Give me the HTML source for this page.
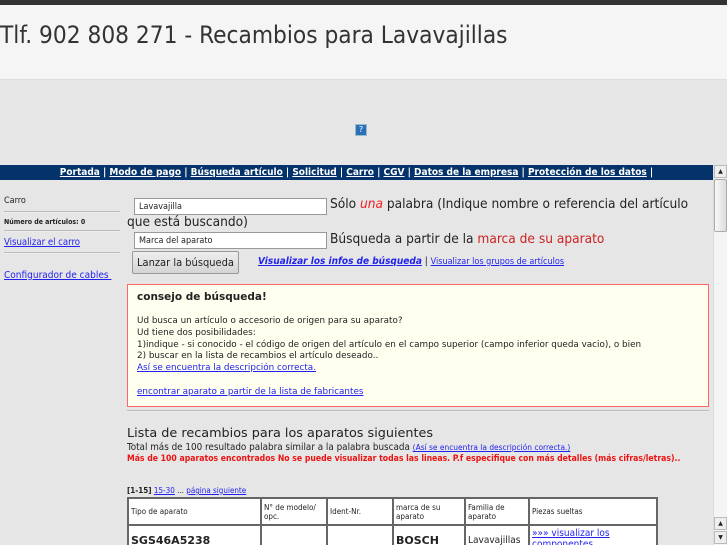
<!DOCTYPE html>
<html style="overflow:hidden"><head><meta charset="utf-8"><style>
*{margin:0;padding:0;box-sizing:border-box}
html,body{width:727px;height:545px;overflow:hidden}
body{background:#e6e6e6;font-family:"DejaVu Sans","Liberation Sans",sans-serif;color:#222;position:relative}
.a{position:absolute;white-space:nowrap}
.c{font-family:"DejaVu Sans Condensed","DejaVu Sans",sans-serif}
a{color:#22e;text-decoration:underline}
.hr{position:absolute;height:2px;background:#bbb;border-bottom:1px solid #eee}
.inp{position:absolute;background:#fff;border:1px solid #999;font-size:9px;padding:3px 4px;height:17px;width:193px}
table{position:absolute;left:127px;top:497px;border-collapse:collapse;background:#fff;font-size:8px}
td{border:2px solid #666;padding:2px 2px;vertical-align:middle}
</style></head><body>
<div class="a" style="left:0;top:0;width:727px;height:5px;background:#333"></div>
<div class="a" style="left:0;top:5px;width:727px;height:75px;background:#f5f5f5;border-bottom:1px solid #ddd"></div>
<div class="a c" style="left:0;top:21px;font-size:24.2px;color:#333">Tlf. 902 808 271 - Recambios para Lavavajillas</div>
<div class="a" style="left:355px;top:124px;width:12px;height:12px;background:#2a6fb8;border:1px solid #9bc;color:#fff;font-size:8px;text-align:center;line-height:10px">?</div>

<div class="a c" style="left:0;top:165px;width:713px;height:15px;background:#03336a;color:#fff;font-size:10px;font-weight:bold;line-height:15px;text-align:center;padding-left:0">
<span style="text-decoration:underline">Portada</span> | <span style="text-decoration:underline">Modo de pago</span> | <span style="text-decoration:underline">Búsqueda artículo</span> | <span style="text-decoration:underline">Solicitud</span> | <span style="text-decoration:underline">Carro</span> | <span style="text-decoration:underline">CGV</span> | <span style="text-decoration:underline">Datos de la empresa</span> | <span style="text-decoration:underline">Protección de los datos</span> |</div>

<div class="a c" style="left:4px;top:196px;font-size:9px">Carro</div>
<div class="hr" style="left:4px;top:211px;width:116px"></div>
<div class="a c" style="left:4px;top:218px;font-size:7px;font-weight:bold">Número de artículos: 0</div>
<div class="hr" style="left:4px;top:230px;width:116px"></div>
<div class="a c" style="left:4px;top:237px;font-size:9.5px"><a>Visualizar el carro</a></div>
<div class="hr" style="left:4px;top:252px;width:116px"></div>
<div class="a c" style="left:4px;top:270px;font-size:10px"><a>Configurador de cables&nbsp;</a></div>

<div class="inp c" style="left:134px;top:198px">Lavavajilla</div>
<div class="a c" style="left:330px;top:196px;font-size:13.6px">Sólo <i style="color:#e22">una</i> palabra (Indique nombre o referencia del artículo</div>
<div class="a c" style="left:127px;top:214px;font-size:13.6px">que está buscando)</div>
<div class="inp c" style="left:134px;top:232px">Marca del aparato</div>
<div class="a c" style="left:330px;top:231px;font-size:13.6px">Búsqueda a partir de la <span style="color:#c22">marca de su aparato</span></div>
<div class="a c" style="left:132px;top:251px;width:107px;height:23px;border:1px solid #999;border-radius:2px;background:linear-gradient(#eee,#d4d4d4);font-size:11px;text-align:center;line-height:21px">Lanzar la búsqueda</div>
<div class="a c" style="left:258px;top:256px;font-size:10px"><a style="font-weight:bold;font-style:italic">Visualizar los infos de búsqueda</a> | <a style="font-size:9px">Visualizar los grupos de artículos</a></div>

<div class="a" style="left:127px;top:284px;width:582px;height:123px;background:#ffffef;border:1px solid #f66"></div>
<div class="a" style="left:137px;top:291px;font-size:10.5px;font-weight:bold">consejo de búsqueda!</div>
<div class="a" style="left:137px;top:316px;font-size:8.8px;line-height:11.8px">Ud busca un artículo o accesorio de origen para su aparato?<br>Ud tiene dos posibilidades:<br>1)indique - si conocido - el código de origen del artículo en el campo superior (campo inferior queda vacio), o bien<br>2) buscar en la lista de recambios el artículo deseado..<br><a>Así se encuentra la descripción correcta.</a><br><br><a>encontrar aparato a partir de la lista de fabricantes</a></div>
<div class="hr" style="left:127px;top:410px;width:582px"></div>

<div class="a" style="left:127px;top:426px;font-size:12.8px">Lista de recambios para los aparatos siguientes</div>
<div class="a c" style="left:127px;top:442px;font-size:9.8px">Total más de 100 resultado palabra similar a la palabra buscada <a style="font-size:8.3px">(Así se encuentra la descripción correcta.)</a></div>
<div class="a c" style="left:127px;top:454px;font-size:8.6px;font-weight:bold;color:#e11">Más de 100 aparatos encontrados No se puede visualizar todas las lineas. P.f especifique con más detalles (más cifras/letras)..</div>
<div class="a c" style="left:127px;top:486px;font-size:8px"><b>[1-15]</b> <a>15-30</a> ... <a>página siguiente</a></div>

<table class="c"><tr style="height:27px">
<td style="width:133px">Tipo de aparato</td><td style="width:66px">N° de modelo/<br>opc.</td><td style="width:66px">Ident-Nr.</td><td style="width:72px">marca de su<br>aparato</td><td style="width:64px">Familia de<br>aparato</td><td style="width:128px">Piezas sueltas</td></tr>
<tr style="height:30px"><td style="font-size:11px;font-weight:bold;font-family:'DejaVu Sans'">SGS46A5238</td><td></td><td></td><td style="font-size:11px;font-weight:bold;font-family:'DejaVu Sans'">BOSCH</td><td style="font-size:10px">Lavavajillas</td><td style="font-size:10px;vertical-align:top"><a>»»» visualizar los componentes</a></td></tr></table>

<div class="a" style="left:713px;top:165px;width:14px;height:380px;background:#f4f4f4;border-left:1px solid #ddd"></div>
<div class="a" style="left:714px;top:165px;width:13px;height:13px;background:#eee;border:1px solid #bbb;font-size:6px;text-align:center;line-height:11px">▲</div>
<div class="a" style="left:714px;top:179px;width:13px;height:53px;background:linear-gradient(90deg,#f8f8f8,#ddd);border:1px solid #aaa;border-radius:2px"></div>
<div class="a" style="left:714px;top:517px;width:13px;height:13px;background:#eee;border:1px solid #bbb;font-size:6px;text-align:center;line-height:11px">▲</div>
<div class="a" style="left:714px;top:531px;width:13px;height:13px;background:#eee;border:1px solid #bbb;font-size:6px;text-align:center;line-height:11px">▼</div>
</body></html>
